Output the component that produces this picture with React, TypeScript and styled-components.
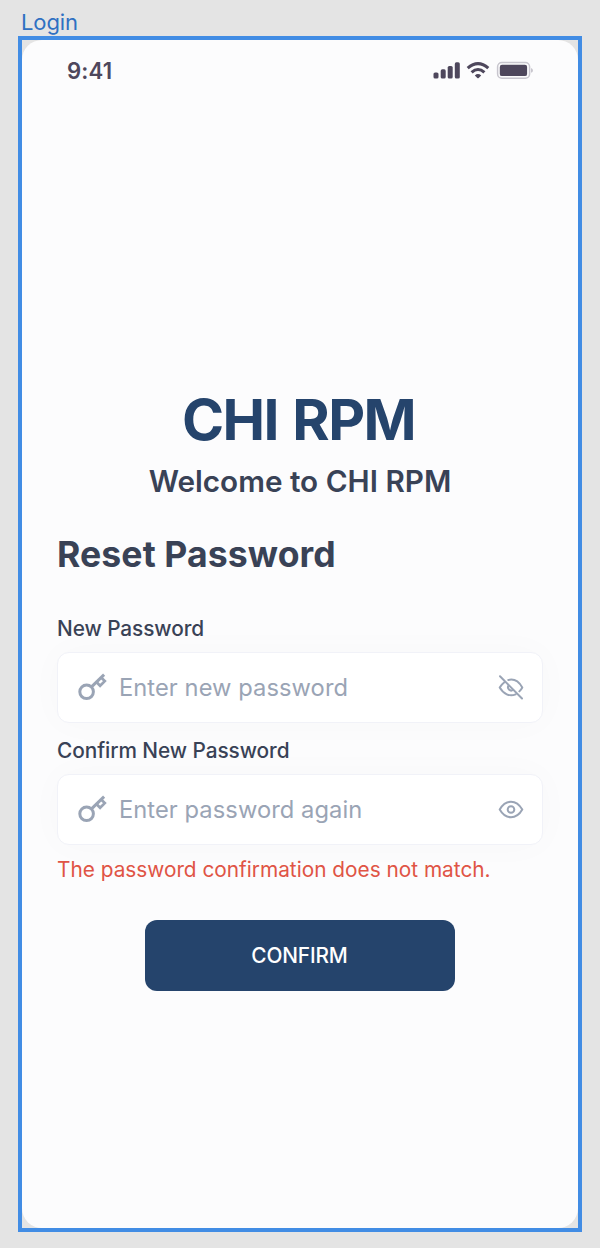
import React from "react";
import styled, { createGlobalStyle } from "styled-components";

const Global = createGlobalStyle`
  * { box-sizing: border-box; }
  body { margin: 0; background: #e4e4e4; font-family: Inter, "Liberation Sans", sans-serif; }
`;

const Canvas = styled.main`
  width: 600px;
  height: 1248px;
  padding: 8px 18px 0;
  background: #e4e4e4;
`;

const FrameName = styled.div`
  height: 28px;
  padding-left: 3px;
  font-size: 22px;
  line-height: 28px;
  letter-spacing: -0.1px;
  color: #2f70c2;
`;

const Selection = styled.div`
  width: 564px;
  height: 1196px;
  border: 4px solid #418ce4;
`;

const Screen = styled.section`
  display: flex;
  flex-direction: column;
  height: 100%;
  padding: 0 35px;
  border-radius: 20px;
  background: #fcfcfd;
`;

const StatusBar = styled.header`
  display: flex;
  justify-content: space-between;
  height: 62px;
  padding: 20px 9px 0 10px;
`;

const Time = styled.span`
  font-size: 22.2px;
  line-height: 22px;
  font-weight: 600;
  letter-spacing: 0.15px;
  color: #4e475c;
`;

const Brand = styled.div`
  display: flex;
  flex-direction: column;
  align-items: center;
  margin-top: 283px;
`;

const Logo = styled.div`
  height: 70px;
  margin-left: -3px;
  line-height: 70px;
  font-size: 57px;
  font-weight: 700;
  letter-spacing: -1.6px;
  word-spacing: 2.5px;
  white-space: nowrap;
  color: #25446c;
`;

const Welcome = styled.h2`
  margin: 8px 0 0;
  font-size: 29.7px;
  line-height: 36px;
  font-weight: 600;
  white-space: nowrap;
  color: #394256;
`;

const Title = styled.h1`
  margin: 34px 0 0;
  font-size: 35.6px;
  line-height: 44px;
  font-weight: 700;
  letter-spacing: 0.1px;
  white-space: nowrap;
  color: #394256;
`;

const Field = styled.div<{ $top: number }>`
  margin-top: ${(p) => p.$top}px;
`;

const Label = styled.label`
  display: block;
  height: 35px;
  font-size: 20.8px;
  line-height: 24px;
  font-weight: 500;
  letter-spacing: -0.06px;
  white-space: nowrap;
  color: #394256;
`;

const InputBox = styled.div`
  display: flex;
  align-items: center;
  height: 71px;
  padding: 0 18px 0 19px;
  border: 1.5px solid #f1f2f8;
  border-radius: 12px;
  background: #fff;
  box-shadow: 0 0 36px rgba(0, 0, 0, 0.025);
  color: #9aa4b5;
`;

const Input = styled.span`
  flex: 1;
  padding-left: 12px;
  font-size: 23.7px;
  line-height: 32px;
  letter-spacing: 0.07px;
  white-space: nowrap;
`;

const ErrorText = styled.p`
  margin: 12px 0 0;
  font-size: 20.8px;
  line-height: 26px;
  white-space: nowrap;
  color: #e05445;
`;

const Confirm = styled.button`
  align-self: center;
  width: 310px;
  height: 71px;
  margin-top: 37px;
  padding: 0 1px 0 0;
  border: 0;
  border-radius: 12px;
  background: #25446c;
  color: #fff;
  font: 500 20.8px/30px Inter, "Liberation Sans", sans-serif;
  letter-spacing: -0.12px;
`;

const Glyph = styled.svg`
  display: block;
  flex: none;
`;

const StatusIcons = () => (
  <Glyph width="102" height="22" viewBox="432 60 102 22" fill="#4e475c">
    <rect x="433.5" y="72.5" width="5" height="6" rx="1.6" />
    <rect x="440.7" y="69.3" width="5" height="9.2" rx="1.6" />
    <rect x="447.7" y="66" width="5" height="12.5" rx="1.6" />
    <rect x="454.8" y="62.3" width="5" height="16.2" rx="1.6" />
    <g fill="none" stroke="#4e475c" strokeWidth="3.1">
      <path d="M467.7 68.2Q478 59 488.3 68.2" />
      <path d="M471.6 72.4Q478 66.6 484.4 72.4" />
    </g>
    <path d="M474.8 75.4Q478 72.8 481.2 75.4L478.7 77.9Q478 78.5 477.3 77.9Z" />
    <rect x="497.6" y="62.5" width="32" height="15.8" rx="4.3" fill="none" stroke="#c8c6ce" strokeWidth="1.5" />
    <rect x="499.8" y="64.8" width="27.3" height="11.3" rx="2.2" />
    <path d="M531 68Q533 68.7 533 70.4T531 72.8Z" fill="#c8c6ce" />
  </Glyph>
);

const KeyIcon = () => (
  <Glyph width="30" height="30" viewBox="0 0 30 30" fill="none" stroke="currentColor" strokeWidth="3">
    <circle cx="9.6" cy="18.8" r="6.8" />
    <path d="M14.5 13.9L27.1 1.6" />
    <path d="M19.4 9L23.1 12.8L27.8 8.1L24.1 4.6" strokeWidth="2.7" />
  </Glyph>
);

const eye = "M1.7 13.5C4.5 8.7 8.6 5.7 13 5.7S21.5 8.7 24.3 13.5C21.5 18.3 17.4 21.3 13 21.3S4.5 18.3 1.7 13.5Z";

const EyeIcon = () => (
  <Glyph width="26" height="28" viewBox="0 0 26 28" fill="none" stroke="currentColor" strokeWidth="2" strokeLinejoin="round">
    <path d={eye} />
    <circle cx="13" cy="13.5" r="3.3" />
  </Glyph>
);

const EyeOffIcon = () => (
  <Glyph width="26" height="28" viewBox="0 0.5 26 28" fill="none" stroke="currentColor" strokeWidth="2" strokeLinecap="round" strokeLinejoin="round">
    <path d="M2 2.8L24 25" />
    <path d="M10.3 6.5C16.2 5 21.2 8.6 24.3 14C23.5 15.5 22.5 16.8 21.4 17.9" />
    <path d="M6.4 8.7C4.4 10.2 2.9 12 1.7 14C5.4 20.4 11.6 23.6 17.6 20.8" />
    <path d="M10.5 12A3.3 3.3 0 0 0 15.1 16.5" />
  </Glyph>
);

export default function App() {
  return (
    <>
      <Global />
      <Canvas>
        <FrameName>Login</FrameName>
        <Selection>
          <Screen>
            <StatusBar>
              <Time>9:41</Time>
              <StatusIcons />
            </StatusBar>
            <Brand>
              <Logo>CHI RPM</Logo>
              <Welcome>Welcome to CHI RPM</Welcome>
            </Brand>
            <Title>Reset Password</Title>
            <Field $top={40}>
              <Label>New Password</Label>
              <InputBox>
                <KeyIcon />
                <Input>Enter new password</Input>
                <EyeOffIcon />
              </InputBox>
            </Field>
            <Field $top={16}>
              <Label>Confirm New Password</Label>
              <InputBox>
                <KeyIcon />
                <Input>Enter password again</Input>
                <EyeIcon />
              </InputBox>
            </Field>
            <ErrorText>The password confirmation does not match.</ErrorText>
            <Confirm>CONFIRM</Confirm>
          </Screen>
        </Selection>
      </Canvas>
    </>
  );
}
